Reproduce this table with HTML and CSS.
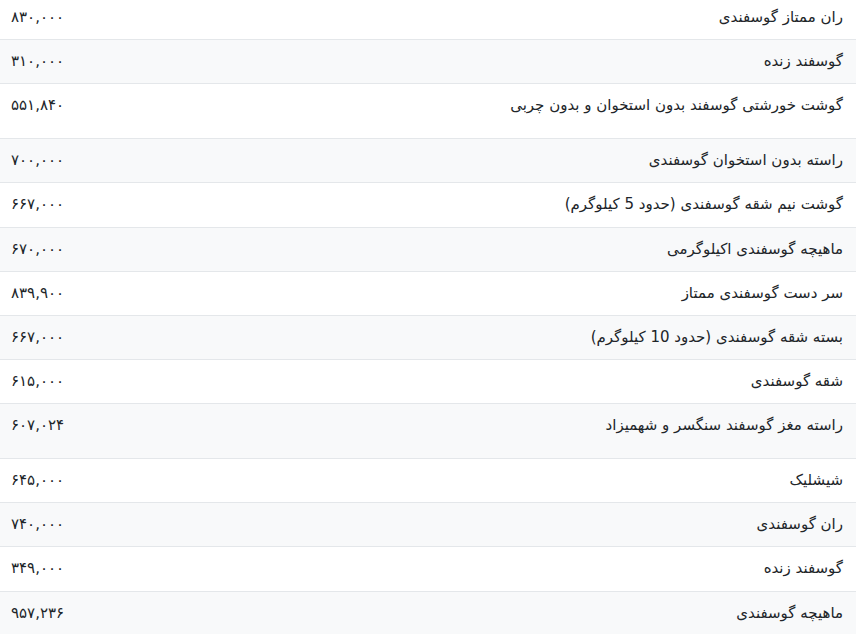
FILE: index.html
```html
<!DOCTYPE html>
<html lang="fa" dir="rtl">
<head>
<meta charset="utf-8">
<link rel="stylesheet" href="styles.css">
</head>
<body>
<div class="wrap">
<table class="prices">
<tbody>
<tr><td class="name">ران ممتاز گوسفندی</td><td class="price"><span dir="ltr">۸۳۰,۰۰۰</span></td></tr>
<tr><td class="name">گوسفند زنده</td><td class="price"><span dir="ltr">۳۱۰,۰۰۰</span></td></tr>
<tr class="tall"><td class="name">گوشت خورشتی گوسفند بدون استخوان و بدون چربی</td><td class="price"><span dir="ltr">۵۵۱,۸۴۰</span></td></tr>
<tr><td class="name">راسته بدون استخوان گوسفندی</td><td class="price"><span dir="ltr">۷۰۰,۰۰۰</span></td></tr>
<tr><td class="name">گوشت نیم شقه گوسفندی (حدود 5 کیلوگرم)</td><td class="price"><span dir="ltr">۶۶۷,۰۰۰</span></td></tr>
<tr><td class="name">ماهیچه گوسفندی اکیلوگرمی</td><td class="price"><span dir="ltr">۶۷۰,۰۰۰</span></td></tr>
<tr><td class="name">سر دست گوسفندی ممتاز</td><td class="price"><span dir="ltr">۸۳۹,۹۰۰</span></td></tr>
<tr><td class="name">بسته شقه گوسفندی (حدود 10 کیلوگرم)</td><td class="price"><span dir="ltr">۶۶۷,۰۰۰</span></td></tr>
<tr><td class="name">شقه گوسفندی</td><td class="price"><span dir="ltr">۶۱۵,۰۰۰</span></td></tr>
<tr class="tall"><td class="name">راسته مغز گوسفند سنگسر و شهمیزاد</td><td class="price"><span dir="ltr">۶۰۷,۰۲۴</span></td></tr>
<tr><td class="name">شیشلیک</td><td class="price"><span dir="ltr">۶۴۵,۰۰۰</span></td></tr>
<tr><td class="name">ران گوسفندی</td><td class="price"><span dir="ltr">۷۴۰,۰۰۰</span></td></tr>
<tr><td class="name">گوسفند زنده</td><td class="price"><span dir="ltr">۳۴۹,۰۰۰</span></td></tr>
<tr><td class="name">ماهیچه گوسفندی</td><td class="price"><span dir="ltr">۹۵۷,۲۳۶</span></td></tr>
</tbody>
</table>
</div>
</body>
</html>
```
FILE: styles.css
```css
html, body {
  margin: 0;
  padding: 0;
  background: #ffffff;
  overflow: hidden;
}
body {
  font-family: "DejaVu Sans", "Noto Sans", sans-serif;
  color: #212529;
  font-size: 15px;
}
.wrap {
  margin-top: -4px;
}
.prices {
  width: 100%;
  border-collapse: collapse;
}
.prices td {
  padding: 12px 13px 12px 11px;
  line-height: 19.2px;
  border-top: 1px solid #e4e7ea;
  vertical-align: top;
  white-space: nowrap;
}
.prices tr:nth-child(even) td {
  background: #f8f9fa;
}
.prices tr:first-child td {
  border-top: none;
}
.prices .name {
  text-align: right;
  padding-right: 13px;
}
.prices .price {
  text-align: left;
  padding-left: 11px;
  width: 1%;
}
.prices .tall td {
  padding-bottom: 22.5px;
}
```
